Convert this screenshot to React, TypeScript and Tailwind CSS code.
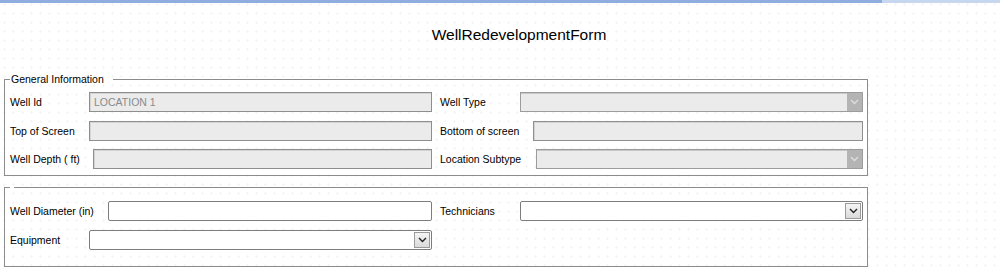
import React from "react";

function Chevron({ color }: { color: string }) {
  return (
    <svg width="9" height="6" viewBox="0 0 9 6" fill="none">
      <path d="M1 1 L4.5 4.5 L8 1" stroke={color} strokeWidth="1.4" />
    </svg>
  );
}

function DisabledText({ value }: { value?: string }) {
  return (
    <div className="flex h-[20px] flex-1 items-center border border-[#8e8e8e] bg-[#ebebeb] pl-[4px] text-[#8a8a8a] shadow-[inset_1px_1px_0_#d4d4d4]">
      {value}
    </div>
  );
}

function DisabledSelect() {
  return (
    <div className="flex h-[20px] flex-1 border border-[#9c9c9c] bg-[#ebebeb] shadow-[inset_0_1px_0_#c8c8c8]">
      <div className="flex-1" />
      <div className="flex w-[15px] items-center justify-center bg-[#b4b4b4]">
        <Chevron color="#dedede" />
      </div>
    </div>
  );
}

function TextInput() {
  return <div className="h-[20px] flex-1 rounded-[2px] border border-[#7d7d7d] bg-white" />;
}

function Select() {
  return (
    <div className="flex h-[20px] flex-1 rounded-[2px] border border-[#7d7d7d] bg-white p-[1px]">
      <div className="flex-1" />
      <div className="flex w-[16px] items-center justify-center border border-[#9a9a9a] bg-gradient-to-b from-[#f5f5f5] to-[#dadada]">
        <Chevron color="#222222" />
      </div>
    </div>
  );
}

function Field({ label, labelW, wide, children }: { label: string; labelW: string; wide?: boolean; children: React.ReactNode }) {
  return (
    <div className={`flex items-center ${wide ? "w-[423px]" : "w-[422px]"}`}>
      <div className={`${labelW} shrink-0`}>{label}</div>
      {children}
    </div>
  );
}

export default function App() {
  return (
    <div className="min-h-[273px] w-[1000px] bg-white bg-[radial-gradient(circle,#f5f5f5_1px,transparent_1.3px)] bg-[length:9px_9px] font-['Liberation_Sans',Arial,sans-serif] text-[10.5px] leading-[13px] text-black">
      <div className="flex h-[3px]">
        <div className="w-[882px] bg-[#8fadde]" />
        <div className="flex-1 bg-[#c8d7f0]" />
      </div>

      <h1 className="mt-[23px] pl-[38px] text-center text-[15.5px] leading-[18px]">WellRedevelopmentForm</h1>

      <fieldset className="ml-[4px] mt-[29px] w-[864px] border border-[#8c8c8c] pb-[6px] pl-[5px] pr-[4px]">
        <legend className="pl-[1px] pr-[9px]">General Information</legend>
        <div className="mt-[6px] flex gap-[8px]">
          <Field label="Well Id" labelW="w-[79px]">
            <DisabledText value="LOCATION 1" />
          </Field>
          <Field label="Well Type" labelW="w-[80px]" wide>
            <DisabledSelect />
          </Field>
        </div>
        <div className="mt-[9px] flex gap-[8px]">
          <Field label="Top of Screen" labelW="w-[79px]">
            <DisabledText />
          </Field>
          <Field label="Bottom of screen" labelW="w-[93px]" wide>
            <DisabledText />
          </Field>
        </div>
        <div className="mt-[8px] flex gap-[8px]">
          <Field label="Well Depth ( ft)" labelW="w-[83px]">
            <DisabledText />
          </Field>
          <Field label="Location Subtype" labelW="w-[96px]" wide>
            <DisabledSelect />
          </Field>
        </div>
      </fieldset>

      <fieldset className="ml-[4px] mt-[11px] w-[864px] border border-[#8c8c8c] pb-[16px] pl-[5px] pr-[4px] pt-[13px]">
        <legend className="h-0 w-[4px]" />
        <div className="flex gap-[8px]">
          <Field label="Well Diameter (in)" labelW="w-[98px]">
            <TextInput />
          </Field>
          <Field label="Technicians" labelW="w-[80px]" wide>
            <Select />
          </Field>
        </div>
        <div className="mt-[9px] flex gap-[8px]">
          <Field label="Equipment" labelW="w-[79px]">
            <Select />
          </Field>
        </div>
      </fieldset>
    </div>
  );
}
